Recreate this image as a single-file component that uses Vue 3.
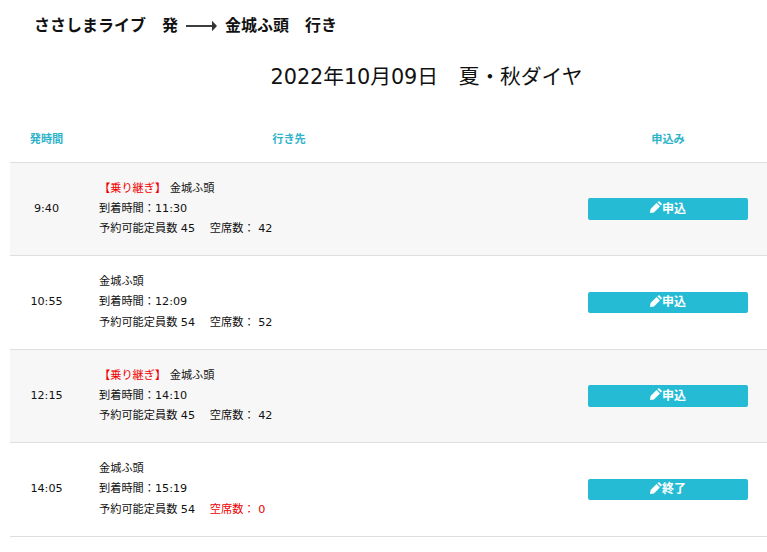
<script setup>
import { ref } from 'vue'

const buses = ref([
  { time: '9:40', transfer: true, arrival: '11:30', capacity: 45, seats: 42 },
  { time: '10:55', transfer: false, arrival: '12:09', capacity: 54, seats: 52 },
  { time: '12:15', transfer: true, arrival: '14:10', capacity: 45, seats: 42 },
  { time: '14:05', transfer: false, arrival: '15:19', capacity: 54, seats: 0 }
])
</script>

<template>
  <main class="page">
    <h1 class="route">
      <span>ささしまライブ　発</span>
      <svg class="arrow" width="31" height="12" viewBox="0 0 31 12">
        <path d="M0 6H28" stroke="#333" stroke-width="1.9" />
        <path d="M26 .8L31 6L26 11.2Z" fill="#333" />
      </svg>
      <span>金城ふ頭　行き</span>
    </h1>

    <h2 class="date">2022年10月09日　夏・秋ダイヤ</h2>

    <table>
      <thead>
        <tr>
          <th class="col-time">発時間</th>
          <th class="col-dest">行き先</th>
          <th class="col-apply">申込み</th>
        </tr>
      </thead>
      <tbody>
        <tr v-for="bus in buses" :key="bus.time">
          <td class="time">{{ bus.time }}</td>
          <td class="dest">
            <div><span v-if="bus.transfer" class="red">【乗り継ぎ】 </span>金城ふ頭</div>
            <div>到着時間：{{ bus.arrival }}</div>
            <div>予約可能定員数 {{ bus.capacity }}　 <span :class="{ red: bus.seats === 0 }">空席数： {{ bus.seats }}</span></div>
          </td>
          <td class="apply">
            <button type="button">
              <svg width="12" height="12" viewBox="0 0 11 11" fill="#fff">
                <path d="M0 11L.5 7.4L6 1.9L9.1 5L3.6 10.5Z" />
                <path d="M6.8 1.1L7.5.4Q8.1-.1 8.7.4L10.6 2.3Q11.1 2.9 10.6 3.5L9.9 4.2Z" />
              </svg>
              <span>{{ bus.seats > 0 ? '申込' : '終了' }}</span>
            </button>
          </td>
        </tr>
      </tbody>
    </table>
  </main>
</template>

<style>
body {
  background: #fff;
}
</style>

<style scoped>
.page {
  height: 552px;
  overflow: hidden;
  color: #111;
  font-family: "DejaVu Sans", "Noto Sans CJK JP", sans-serif;
  font-size: 11.2px;
  line-height: 20.2px;
}

.route {
  display: flex;
  align-items: center;
  height: 28px;
  margin: 12px 0 0 34px;
  font-size: 16px;
  font-weight: bold;
}

.arrow {
  margin: 0 8px;
}

.date {
  margin: 18px 0 0;
  padding-left: 86px;
  height: 38px;
  line-height: 38px;
  font-size: 20.8px;
  font-weight: 400;
  letter-spacing: -0.08px;
  text-align: center;
}

table {
  width: 831px;
  margin: 18.8px 0 0 10px;
  table-layout: fixed;
  border-collapse: separate;
  border-spacing: 0;
}

th,
td {
  padding: 0 16px;
  border-bottom: 1px solid #dfdfdf;
  box-sizing: border-box;
}

th {
  height: 48px;
  padding: 4px 0 0;
  color: #2fb3c9;
  font-weight: bold;
}

td {
  height: 93.5px;
}

.col-time {
  width: 73px;
}

.col-dest {
  width: 412px;
}

.time {
  padding: 0;
  text-align: center;
}

.apply {
  text-align: center;
}

tbody tr:nth-child(odd) {
  background: #f7f7f7;
}

.red {
  color: #f00000;
}

button {
  display: flex;
  align-items: center;
  justify-content: center;
  width: 160px;
  height: 21.6px;
  margin: 0 auto;
  padding: 0 0 4px;
  border: 0;
  border-radius: 2px;
  background: #26bbd5;
  color: #fff;
  font-family: inherit;
  font-size: 12px;
  font-weight: bold;
}
</style>
